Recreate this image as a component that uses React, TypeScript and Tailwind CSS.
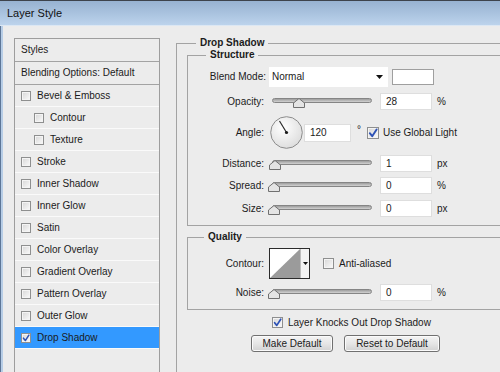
import React from 'react';

type StyleItem = { label: string; indent?: boolean; checked?: boolean; selected?: boolean };

const styleItems: StyleItem[] = [
  { label: 'Bevel & Emboss' },
  { label: 'Contour', indent: true },
  { label: 'Texture', indent: true },
  { label: 'Stroke' },
  { label: 'Inner Shadow' },
  { label: 'Inner Glow' },
  { label: 'Satin' },
  { label: 'Color Overlay' },
  { label: 'Gradient Overlay' },
  { label: 'Pattern Overlay' },
  { label: 'Outer Glow' },
  { label: 'Drop Shadow', checked: true, selected: true },
];

function CheckBox({ checked = false, size = 10 }: { checked?: boolean; size?: number }) {
  return (
    <span
      className="flex shrink-0 items-center justify-center border border-[#8e8f8f] bg-gradient-to-br from-[#d6d6d6] to-[#fbfbfb] shadow-[inset_0_0_0_1px_#f4f4f4]"
      style={{ width: size, height: size }}
    >
      {checked && (
        <svg width={size - 2} height={size - 2} viewBox="0 0 10 10">
          <path d="M1.8 5.2 L4.2 8.2 L8.6 1.4" fill="none" stroke="#2d52b5" strokeWidth="1.9" strokeLinecap="round" strokeLinejoin="round" />
        </svg>
      )}
    </span>
  );
}

function Slider({ value }: { value: number }) {
  return (
    <div className="relative ml-[8px] h-[17px] w-[100px] pt-[5px]">
      <div className="h-[5px] w-full rounded-full border border-[#858585] bg-gradient-to-b from-[#9d9d9d] to-[#d2d2d2]" />
      <svg
        className="absolute top-[5px]"
        style={{ left: -4 + value * 0.89 }}
        width="12"
        height="10"
        viewBox="0 0 12 10"
      >
        <path d="M6 0.5 L11.5 5 L11.5 9.5 L0.5 9.5 L0.5 5 Z" fill="#e4e4e4" stroke="#707070" strokeWidth="1" />
      </svg>
    </div>
  );
}

function NumField({ value, w = 52, h = 17, ml = 8 }: { value: string; w?: number; h?: number; ml?: number }) {
  return (
    <div
      className="flex shrink-0 items-center border border-[#dedede] bg-white pl-[5px]"
      style={{ width: w, height: h, marginLeft: ml }}
    >
      {value}
    </div>
  );
}

function Label({ text }: { text: string }) {
  return <span className="w-[76px] shrink-0 text-right">{text}</span>;
}

function SliderRow({ label, value, unit, mt }: { label: string; value: number; unit: string; mt: string }) {
  return (
    <div className={`flex h-[17px] items-center ${mt}`}>
      <Label text={`${label}:`} />
      <Slider value={value} />
      <NumField value={String(value)} />
      <span className="ml-[5px]">{unit}</span>
    </div>
  );
}

function Dial() {
  return (
    <svg className="ml-[6px] shrink-0" width="33" height="33" viewBox="0 0 33 33">
      <defs>
        <radialGradient id="dialFill" cx="0.4" cy="0.35" r="0.7">
          <stop offset="0" stopColor="#ffffff" />
          <stop offset="1" stopColor="#dcdcdc" />
        </radialGradient>
      </defs>
      <circle cx="16.5" cy="16.5" r="15.8" fill="url(#dialFill)" stroke="#8c8c8c" strokeWidth="1" />
      <line x1="16.5" y1="16.5" x2="9.5" y2="5" stroke="#2a2a2a" strokeWidth="1.2" />
      <circle cx="16.5" cy="16.5" r="1.6" fill="#1a1a1a" />
    </svg>
  );
}

function ContourPicker() {
  return (
    <div className="ml-[5px] flex h-[31px] w-[41px] shrink-0 border border-[#2b2b2b] bg-white">
      <svg width="30" height="29" viewBox="0 0 30 29">
        <rect width="30" height="29" fill="#ffffff" />
        <path d="M0 29 L30 0 L30 29 Z" fill="#9b9b9b" />
      </svg>
      <div className="flex flex-1 items-center justify-center border-l border-[#bdbdbd] bg-[#f3f3f3]">
        <svg width="5" height="3" viewBox="0 0 5 3">
          <path d="M0 0 H5 L2.5 3 Z" fill="#111" />
        </svg>
      </div>
    </div>
  );
}

function Button({ text, w }: { text: string; w: number }) {
  return (
    <div
      className="flex h-[17px] items-center justify-center rounded-[3px] border border-[#707070] bg-gradient-to-b from-[#f4f4f4] via-[#e6e6e6] to-[#d2d2d2] shadow-[inset_0_0_0_1px_#fbfbfb]"
      style={{ width: w }}
    >
      {text}
    </div>
  );
}

export default function App() {
  return (
    <div className="h-[372px] w-[500px] overflow-hidden bg-[#ececec] font-['Liberation_Sans',Arial,sans-serif] text-[10px] leading-[12px] text-[#1b1b1b]">
      <div className="flex h-[26px] items-center border-t border-[#3d434c] border-b border-b-[#dce7f3] bg-gradient-to-b from-[#97b2d1] to-[#bcd3ec] pl-[7px] text-[11px] text-[#111]">
        Layer Style
      </div>

      <div className="flex h-[346px]">
        <div className="w-[3px] shrink-0 border-l border-[#5d7697] bg-[#b7cde6]" />

        <div className="flex flex-1 pl-[11px]">
          {/* styles list */}
          <div className="mt-[12px] h-[400px] w-[146px] shrink-0 border border-[#9d9d9d]">
            <div className="flex h-[23px] items-center border-b border-[#a3a3a3] pl-[6px]">Styles</div>
            <div className="flex h-[23px] items-center border-b border-[#a3a3a3] pl-[6px]">Blending Options: Default</div>
            {styleItems.map((item) => (
              <div
                key={item.label}
                className={`flex h-[22px] items-center border-b border-[#fafafa] ${item.indent ? 'pl-[19px]' : 'pl-[6px]'} ${item.selected ? 'bg-[#3399ff]' : ''}`}
              >
                <CheckBox checked={item.checked} />
                <span className="ml-[6px]">{item.label}</span>
              </div>
            ))}
          </div>

          {/* settings */}
          <div className="ml-[16px] mt-[11px] w-[360px] shrink-0">
            <fieldset className="border border-[#a3a3a3] pb-[60px] pl-[10px]">
              <legend className="ml-[9px] px-[4px] font-bold leading-[12px]">Drop Shadow</legend>

              <fieldset className="w-[340px] border border-[#a3a3a3] pb-[8px] pt-[5px]">
                <legend className="ml-[18px] px-[4px] font-bold leading-[12px]">Structure</legend>

                <div className="flex h-[21px] items-center">
                  <span className="w-[78px] shrink-0 text-right">Blend Mode:</span>
                  <div className="ml-[3px] flex h-[20px] w-[119px] shrink-0 items-center justify-between bg-white pl-[3px] pr-[5px]">
                    <span>Normal</span>
                    <svg width="7" height="4" viewBox="0 0 7 4">
                      <path d="M0 0 H7 L3.5 4 Z" fill="#111" />
                    </svg>
                  </div>
                  <div className="ml-[4px] h-[16px] w-[42px] shrink-0 border border-[#9f9f9f] bg-white" />
                </div>

                <SliderRow label="Opacity" value={28} unit="%" mt="mt-[6px]" />

                <div className="mt-[6px] flex h-[33px] items-center">
                  <Label text="Angle:" />
                  <Dial />
                  <NumField value="120" w={47} h={18} ml={1} />
                  <span className="ml-[6px] -mt-[6px]">°</span>
                  <span className="ml-[6px]">
                    <CheckBox checked size={12} />
                  </span>
                  <span className="ml-[4px]">Use Global Light</span>
                </div>

                <SliderRow label="Distance" value={1} unit="px" mt="mt-[6px]" />
                <SliderRow label="Spread" value={0} unit="%" mt="mt-[5px]" />
                <SliderRow label="Size" value={0} unit="px" mt="mt-[6px]" />
              </fieldset>

              <fieldset className="mt-[5px] w-[340px] border border-[#a3a3a3] pb-[8px] pt-[5px]">
                <legend className="ml-[16px] px-[4px] font-bold leading-[12px]">Quality</legend>

                <div className="flex h-[31px] items-center">
                  <Label text="Contour:" />
                  <ContourPicker />
                  <span className="ml-[13px]">
                    <CheckBox size={11} />
                  </span>
                  <span className="ml-[5px]">Anti-aliased</span>
                </div>

                <SliderRow label="Noise" value={0} unit="%" mt="mt-[5px]" />
              </fieldset>

              <div className="mt-[6px] flex h-[13px] items-center pl-[85px]">
                <CheckBox checked size={11} />
                <span className="ml-[5px]">Layer Knocks Out Drop Shadow</span>
              </div>

              <div className="mt-[6px] flex gap-[11px] pl-[64px]">
                <Button text="Make Default" w={82} />
                <Button text="Reset to Default" w={96} />
              </div>
            </fieldset>
          </div>
        </div>
      </div>
    </div>
  );
}
